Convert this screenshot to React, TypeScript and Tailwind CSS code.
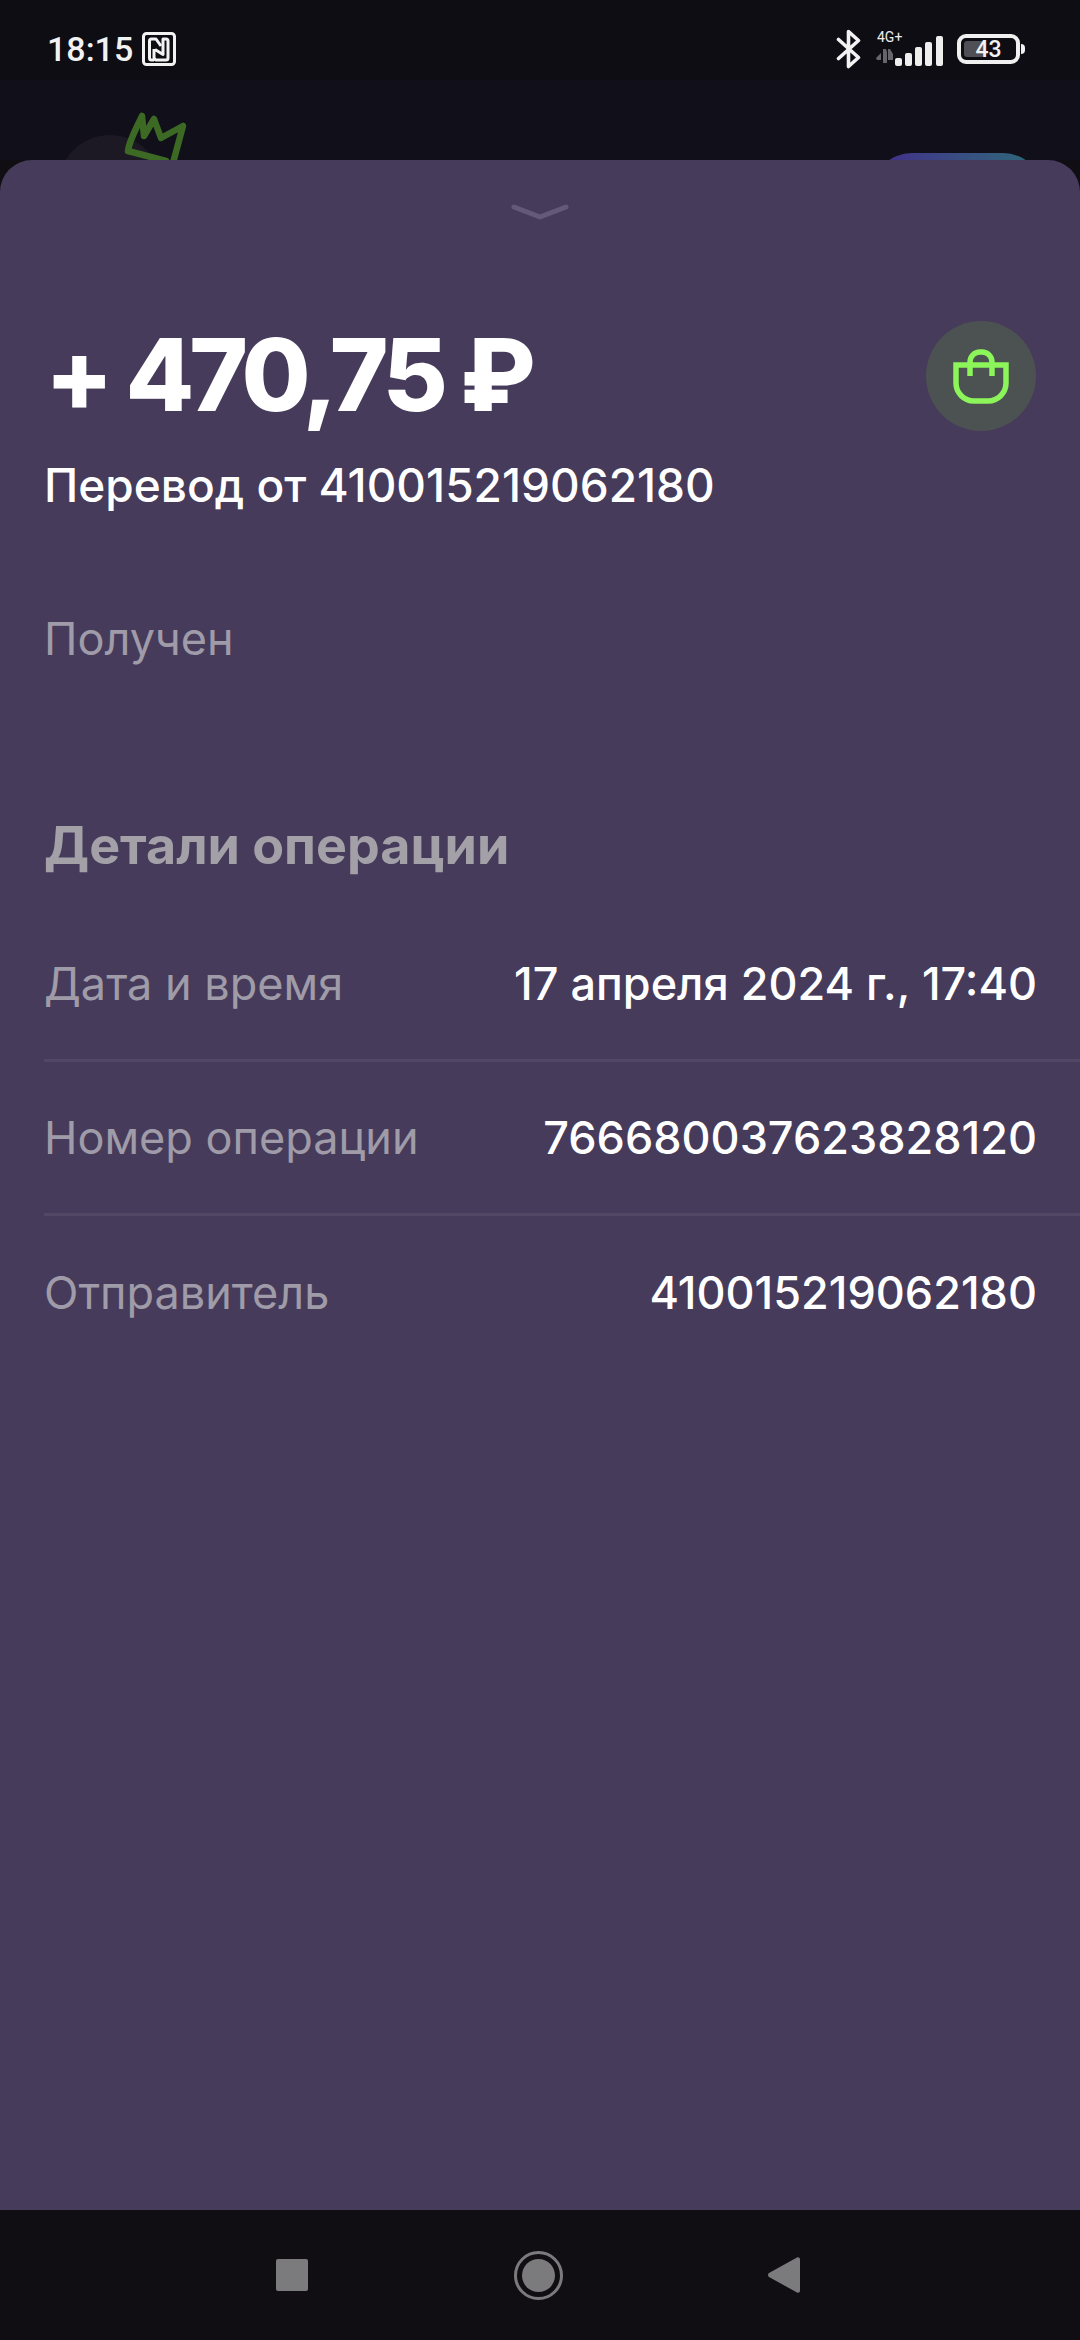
const rows = [
  { label: "Дата и время", value: "17 апреля 2024 г., 17:40" },
  { label: "Номер операции", value: "766680037623828120" },
  { label: "Отправитель", value: "410015219062180" },
];

function NfcIcon() {
  return (
    <svg width="34" height="34" viewBox="0 0 34 34" fill="none" stroke="#f2f2f2" strokeWidth="3">
      <rect x="1.5" y="1.5" width="31" height="31" rx="3" />
      <path d="M12 28H9.5a2 2 0 0 1-2-2V9a2 2 0 0 1 2-2h4.5l5 7" strokeLinejoin="round" />
      <path d="M13 17.5l8 5V7h3a2 2 0 0 1 2 2v17a2 2 0 0 1-2 2H14a3 3 0 0 1-2-3v-8" strokeLinejoin="round" />
    </svg>
  );
}

function BluetoothIcon() {
  return (
    <svg width="26" height="40" viewBox="0 0 26 40" fill="none" stroke="#f2f2f2" strokeWidth="3.6" strokeLinecap="round" strokeLinejoin="round">
      <path d="M2.5 10.5l20 18L12.5 37.5V2.5l10 9-20 18" />
    </svg>
  );
}

function SignalIcon() {
  return (
    <svg width="68" height="32" viewBox="0 0 68 32" fill="#eeeeee">
      <path d="M0 23l5-5v7H1z" fill="#66656b" />
      <path d="M7 14h3l1 3v11H7z" fill="#66656b" />
      <path d="M12 14h2l3 5v6h-5z" fill="#66656b" />
      <rect x="19" y="23" width="7" height="8" rx="2" />
      <rect x="29" y="18" width="7" height="13" rx="2" />
      <rect x="39" y="12" width="7" height="19" rx="2" />
      <rect x="49" y="7" width="7" height="24" rx="2" />
      <rect x="60" y="1" width="7" height="30" rx="2" />
    </svg>
  );
}

function BagIcon() {
  return (
    <svg width="56" height="56" viewBox="0 0 56 56" fill="none" stroke="#8bf55a" strokeWidth="5.5">
      <path d="M3 17H53V35a18 18 0 0 1-18 18H21a18 18 0 0 1-18-18z" />
      <path d="M17 28V14a10 10 0 0 1 10-10h2a10 10 0 0 1 10 10v14" />
    </svg>
  );
}

export default function App() {
  return (
    <div className="flex h-[2340px] w-[1080px] flex-col overflow-hidden bg-[#100e13] font-['Inter',sans-serif] text-white">
      {/* status bar */}
      <div className="flex h-20 items-center justify-between bg-[#0e0d13] pl-[47px] pr-[55px] pt-[18px]">
        <div className="flex items-center gap-[9px] font-['Roboto',sans-serif] text-[34px] font-medium text-[#f2f2f2]">
          <span>18:15</span>
          <NfcIcon />
        </div>
        <div className="flex items-center">
          <BluetoothIcon />
          <div className="relative ml-[14px] h-[40px] w-[68px]">
            <span className="absolute left-[1px] top-[-1px] font-['Roboto',sans-serif] text-[14px] leading-[18px] text-[#eeeeee]">4G+</span>
            <div className="absolute bottom-[2px] left-0 flex">
              <SignalIcon />
            </div>
          </div>
          <div className="ml-[13px] flex items-center gap-[1px]">
            <div className="relative flex h-[30px] w-[63px] items-center justify-center rounded-[9px] border-[4px] border-[#f0f0f0]">
              <div className="absolute bottom-[3px] left-[3px] top-[3px] w-[21px] rounded-[3px] bg-[#504f56]" />
              <span className="relative font-['Roboto',sans-serif] text-[23px] font-medium leading-none text-[#f2f2f2]">43</span>
            </div>
            <div className="h-[10px] w-[4px] rounded-r-full bg-[#f0f0f0]" />
          </div>
        </div>
      </div>

      {/* page behind the sheet */}
      <div className="flex h-20 justify-between overflow-hidden bg-[#110f19] pl-[58px] pr-[37px]">
        <div className="relative mt-[55px] h-[104px] w-[104px] shrink-0 rounded-full bg-[#1c1925]">
          <svg className="absolute left-[66px] top-[-24px]" width="64" height="52" viewBox="0 0 64 52" fill="none" stroke="#3c6a24" strokeWidth="6.5" strokeLinecap="round" strokeLinejoin="round">
            <path d="M4 40c1-10 8-22 14-35l2 20 10-17 7 19 22-12-10 37M4 40l38 10" />
          </svg>
        </div>
        <div className="mt-[73px] h-[100px] w-[171px] shrink-0 rounded-[40px] bg-gradient-to-r from-[#41288a] to-[#2a6a78]" />
      </div>

      {/* bottom sheet */}
      <main className="flex-1 rounded-t-[32px] bg-[#463b5a]">
        <div className="flex justify-center pt-[42px]">
          <svg width="60" height="20" viewBox="0 0 60 20" fill="none" stroke="#65597b" strokeWidth="5" strokeLinecap="round" strokeLinejoin="round">
            <path d="M4 5l26 10 26-10" />
          </svg>
        </div>

        <section className="mt-[93px] flex items-start justify-between pl-[45px] pr-[44px]">
          <h1 className="text-[100px] font-extrabold leading-[120px] tracking-[-5px]">+ 470,75 ₽</h1>
          <div className="mt-[6px] flex h-[110px] w-[110px] items-center justify-center rounded-full bg-[#4c5252]">
            <BagIcon />
          </div>
        </section>
        <p className="mt-[22px] pl-[44px] text-[46px] font-medium leading-[56px]">Перевод от 410015219062180</p>
        <p className="mt-[98px] pl-[44px] text-[45px] leading-[56px] text-[#a09ba8]">Получен</p>

        <h2 className="mt-[149px] pl-[44px] text-[52px] font-bold leading-[60px] text-[#a3a0a8]">Детали операции</h2>

        <div className="mt-[32px] pl-[44px]">
          {rows.map((row, i) => (
            <div
              key={row.label}
              className={
                i < rows.length - 1
                  ? "flex h-[154px] items-center justify-between border-b-[3px] border-[#524866] pr-[43px] text-[45px]"
                  : "flex h-[154px] items-center justify-between pr-[43px] text-[45px]"
              }
            >
              <span className="text-[#a09ba8]">{row.label}</span>
              <span className="font-medium">{row.value}</span>
            </div>
          ))}
        </div>
      </main>

      {/* android nav */}
      <nav className="flex h-[130px] items-center justify-between bg-[#100e13] pl-[276px] pr-[280px]">
        <div className="h-[32px] w-[32px] rounded-[2px] bg-[#7b7b7d]" />
        <div className="flex h-[49px] w-[49px] items-center justify-center rounded-full border-[3.5px] border-[#7b7b7d]">
          <div className="h-[33px] w-[33px] rounded-full bg-[#7b7b7d]" />
        </div>
        <svg width="32" height="38" viewBox="0 0 32 38" fill="#7b7b7d">
          <path d="M29 1.5a2 2 0 0 1 3 1.5v32a2 2 0 0 1-3 1.5L1 21a2.5 2.5 0 0 1 0-4z" />
        </svg>
      </nav>
    </div>
  );
}
